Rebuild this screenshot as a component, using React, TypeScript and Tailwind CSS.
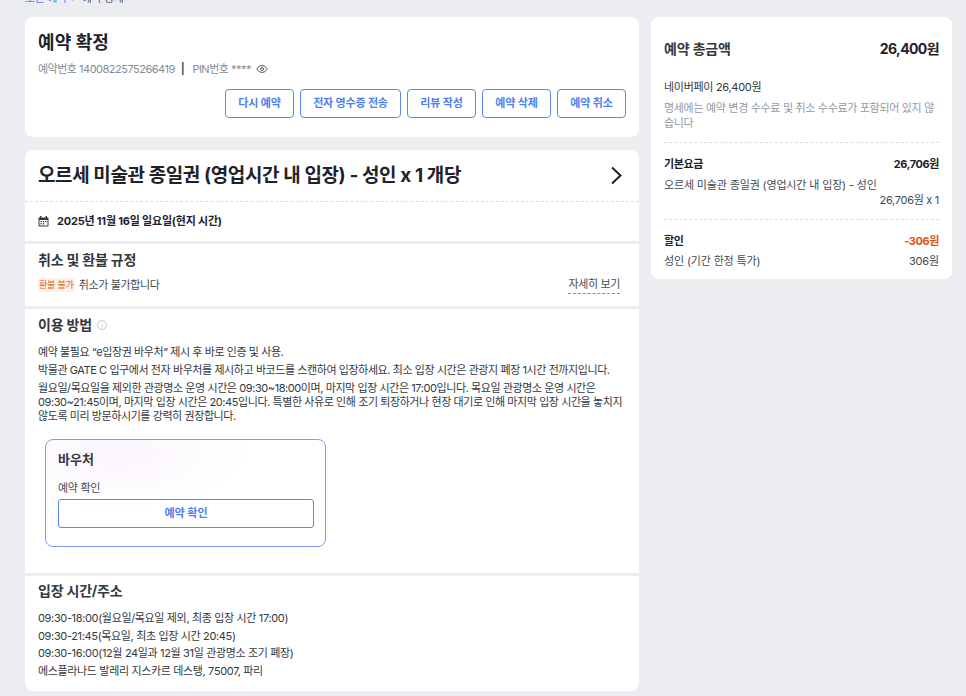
import React from 'react';
import { Eye } from 'lucide-react';

const font = "font-['Inter','Noto_Sans_CJK_KR',sans-serif]";

const actions = [
  { label: '다시 예약', width: 'w-[69px]' },
  { label: '전자 영수증 전송', width: 'w-[101px]' },
  { label: '리뷰 작성', width: 'w-[69px]' },
  { label: '예약 삭제', width: 'w-[69px]' },
  { label: '예약 취소', width: 'w-[69px]' },
];

const Divider = () => <div className="h-[3px] bg-[#ebedf1]" />;

const App: React.FC = () => {
  return (
    <div className={`${font} w-[966px] h-[696px] overflow-hidden bg-[#ebedf1] flex flex-col`}>
      <div className="h-[17px] shrink-0 relative overflow-hidden">
        <div className="absolute left-[25px] -top-[8px] text-[11px] leading-[12px] tracking-[-0.35px] flex gap-[4px]">
          <span className="text-[#4f7ff5]">모든 예약</span>
          <span className="text-[#4f7ff5]">&gt;</span>
          <span className="text-[#555b66]">예약 상세</span>
        </div>
      </div>

      <div className="flex gap-[12px] pl-[25px] items-start">
        <div className="w-[614px] flex flex-col gap-[13px] shrink-0">
          {/* Header */}
          <section className="bg-white rounded-[8px] h-[120px] px-[13px] pt-[13px]">
            <h1 className="text-[18px] leading-[26px] font-bold text-[#1f2329] tracking-[0.1px]">예약 확정</h1>
            <div className="mt-[5px] flex items-center text-[11px] leading-[16px] tracking-[-0.5px] text-[#858b96]">
              <span>예약번호 1400822575266419</span>
              <span className="ml-[6px] mr-[8px] font-bold text-[#555b66]">|</span>
              <span>PIN번호 ****</span>
              <Eye size={12} className="ml-[5px] text-[#555b66]" />
            </div>
            <div className="mt-[12px] flex justify-end gap-[6px]">
              {actions.map((a) => (
                <button
                  key={a.label}
                  className={`${a.width} h-[29px] border border-[#5b86f5] rounded-[4px] text-[11px] tracking-[-0.15px] font-bold text-[#4f7ff5] bg-white`}
                >
                  {a.label}
                </button>
              ))}
            </div>
          </section>

          {/* Details */}
          <section className="bg-white rounded-[8px] overflow-hidden">
            <div className="h-[51px] pl-[13px] pr-[16px] flex items-center justify-between">
              <h2 className="text-[19px] leading-[26px] font-bold text-[#1f2329] tracking-[-0.4px]">
                오르세 미술관 종일권 (영업시간 내 입장) - 성인 x 1 개당
              </h2>
              <svg width="13" height="19" viewBox="0 0 13 19" fill="none" stroke="#1f2329" strokeWidth="2">
                <path d="M2 1.5L10.5 9.5L2 17.5" />
              </svg>
            </div>
            <div className="border-t border-dashed border-[#dcdfe4] h-[40px] px-[13px] flex items-center gap-[8px]">
              <svg width="11" height="11" viewBox="0 0 11 11" fill="none">
                <rect x="0.5" y="1.5" width="10" height="9" rx="1" fill="#333841" />
                <rect x="2" y="0" width="1.4" height="2.5" fill="#333841" />
                <rect x="7.6" y="0" width="1.4" height="2.5" fill="#333841" />
                <rect x="1.5" y="4" width="8" height="5.5" fill="#fff" />
                <rect x="2.5" y="5" width="1.4" height="1.2" fill="#333841" />
                <rect x="4.8" y="5" width="1.4" height="1.2" fill="#333841" />
                <rect x="7.1" y="5" width="1.4" height="1.2" fill="#333841" />
                <rect x="2.5" y="7.2" width="1.4" height="1.2" fill="#333841" />
                <rect x="4.8" y="7.2" width="1.4" height="1.2" fill="#333841" />
              </svg>
              <span className="text-[11px] tracking-[-0.2px] font-bold text-[#1f2329]">2025년 11월 16일 일요일(현지 시간)</span>
            </div>
            <Divider />

            {/* Cancel policy */}
            <div className="h-[62px] px-[13px] pt-[6px]">
              <h3 className="text-[14px] leading-[20px] tracking-[-0.2px] font-bold text-[#333841]">취소 및 환불 규정</h3>
              <div className="mt-[6px] flex items-center justify-between">
                <div className="flex items-center gap-[4px]">
                  <span className="bg-[#fdf0e8] text-[#e0662a] text-[9px] leading-[14px] tracking-[-0.2px] px-[1px] rounded-[2px]">환불 불가</span>
                  <span className="text-[11px] leading-[16px] tracking-[-0.35px] text-[#444a54]">취소가 불가합니다</span>
                </div>
                <span className="text-[11px] leading-[16px] tracking-[-0.35px] pb-[1px] mr-[6px] text-[#444a54] border-b border-dashed border-[#888e99]">
                  자세히 보기
                </span>
              </div>
            </div>
            <Divider />

            {/* How to use */}
            <div className="h-[264px] px-[13px] pt-[6px]">
              <div className="flex items-center gap-[5px]">
                <h3 className="text-[14px] leading-[20px] tracking-[-0.2px] font-bold text-[#333841]">이용 방법</h3>
                <svg width="10" height="10" viewBox="0 0 10 10" fill="none" stroke="#b4b8c0" strokeWidth="0.8">
                  <circle cx="5" cy="5" r="4.4" />
                  <path d="M5 4.4V7.4M5 2.6V3.4" />
                </svg>
              </div>
              <div className="mt-[10px] text-[11px] leading-[14px] tracking-[-0.42px] break-keep text-[#333841]">
                <p>예약 불필요 “e입장권 바우처” 제시 후 바로 인증 및 사용.</p>
                <p className="mt-[4px]">박물관 GATE C 입구에서 전자 바우처를 제시하고 바코드를 스캔하여 입장하세요. 최소 입장 시간은 관광지 폐장 1시간 전까지입니다.</p>
                <p className="mt-[4px]">
                  월요일/목요일을 제외한 관광명소 운영 시간은 09:30~18:00이며, 마지막 입장 시간은 17:00입니다. 목요일 관광명소 운영 시간은 09:30~21:45이며, 마지막 입장 시간은 20:45입니다. 특별한 사유로 인해 조기 퇴장하거나 현장 대기로 인해 마지막 입장 시간을 놓치지 않도록 미리 방문하시기를 강력히 권장합니다.
                </p>
              </div>

              <div className="mt-[16px] ml-[7px] w-[281px] h-[108px] border border-[#7c9ef7] rounded-[8px] pl-[12px] pr-[11px] pt-[10px] bg-[radial-gradient(ellipse_at_25%_10%,#fbf5fe_0%,#ffffff_45%)]">
                <h4 className="text-[13px] leading-[18px] font-bold text-[#333841]">바우처</h4>
                <p className="mt-[12px] text-[11px] leading-[16px] tracking-[-0.3px] text-[#444a54]">예약 확인</p>
                <button className="mt-[3px] w-full h-[29px] border border-[#5b86f5] rounded-[3px] text-[11px] font-bold text-[#4f7ff5]">
                  예약 확인
                </button>
              </div>
            </div>
            <Divider />

            {/* Hours */}
            <div className="h-[115px] px-[13px] pt-[5px]">
              <h3 className="text-[14px] leading-[20px] tracking-[-0.2px] font-bold text-[#333841]">입장 시간/주소</h3>
              <div className="mt-[9px] text-[11px] leading-[17.7px] tracking-[-0.35px] text-[#333841]">
                <p>09:30-18:00(월요일/목요일 제외, 최종 입장 시간 17:00)</p>
                <p>09:30-21:45(목요일, 최초 입장 시간 20:45)</p>
                <p>09:30-16:00(12월 24일과 12월 31일 관광명소 조기 폐장)</p>
                <p>에스플라나드 발레리 지스카르 데스탱, 75007, 파리</p>
              </div>
            </div>
          </section>
        </div>

        {/* Summary */}
        <aside className="w-[301px] h-[262px] shrink-0 bg-white rounded-[8px] px-[13px] pt-[21px]">
          <div className="flex items-center justify-between">
            <span className="text-[14px] leading-[22px] tracking-[-0.15px] font-bold text-[#333841]">예약 총금액</span>
            <span className="text-[14px] leading-[22px] tracking-[-0.6px] font-bold text-[#1f2329]">26,400원</span>
          </div>
          <p className="mt-[19px] text-[11px] leading-[16px] tracking-[-0.3px] text-[#333841]">네이버페이 26,400원</p>
          <p className="mt-[6px] text-[11px] leading-[15px] tracking-[-0.32px] break-all text-[#9298a3]">
            명세에는 예약 변경 수수료 및 취소 수수료가 포함되어 있지 않습니다
          </p>
          <div className="mt-[11px] border-t border-dashed border-[#dcdfe4]" />
          <div className="mt-[13px] flex justify-between text-[11px] leading-[16px] tracking-[-0.4px] font-bold text-[#1f2329]">
            <span>기본요금</span>
            <span>26,706원</span>
          </div>
          <p className="mt-[5px] text-[11px] leading-[16px] tracking-[-0.15px] text-[#444a54]">오르세 미술관 종일권 (영업시간 내 입장) - 성인</p>
          <p className="text-right text-[11px] leading-[15px] tracking-[-0.3px] text-[#444a54]">26,706원 x 1</p>
          <div className="mt-[11px] border-t border-dashed border-[#dcdfe4]" />
          <div className="mt-[13px] flex justify-between text-[11px] leading-[16px] tracking-[-0.4px] font-bold">
            <span className="text-[#1f2329]">할인</span>
            <span className="text-[#e0541a]">-306원</span>
          </div>
          <div className="mt-[4px] flex justify-between text-[11px] leading-[16px] tracking-[-0.15px] text-[#444a54]">
            <span>성인 (기간 한정 특가)</span>
            <span>306원</span>
          </div>
        </aside>
      </div>
    </div>
  );
};

export default App;
